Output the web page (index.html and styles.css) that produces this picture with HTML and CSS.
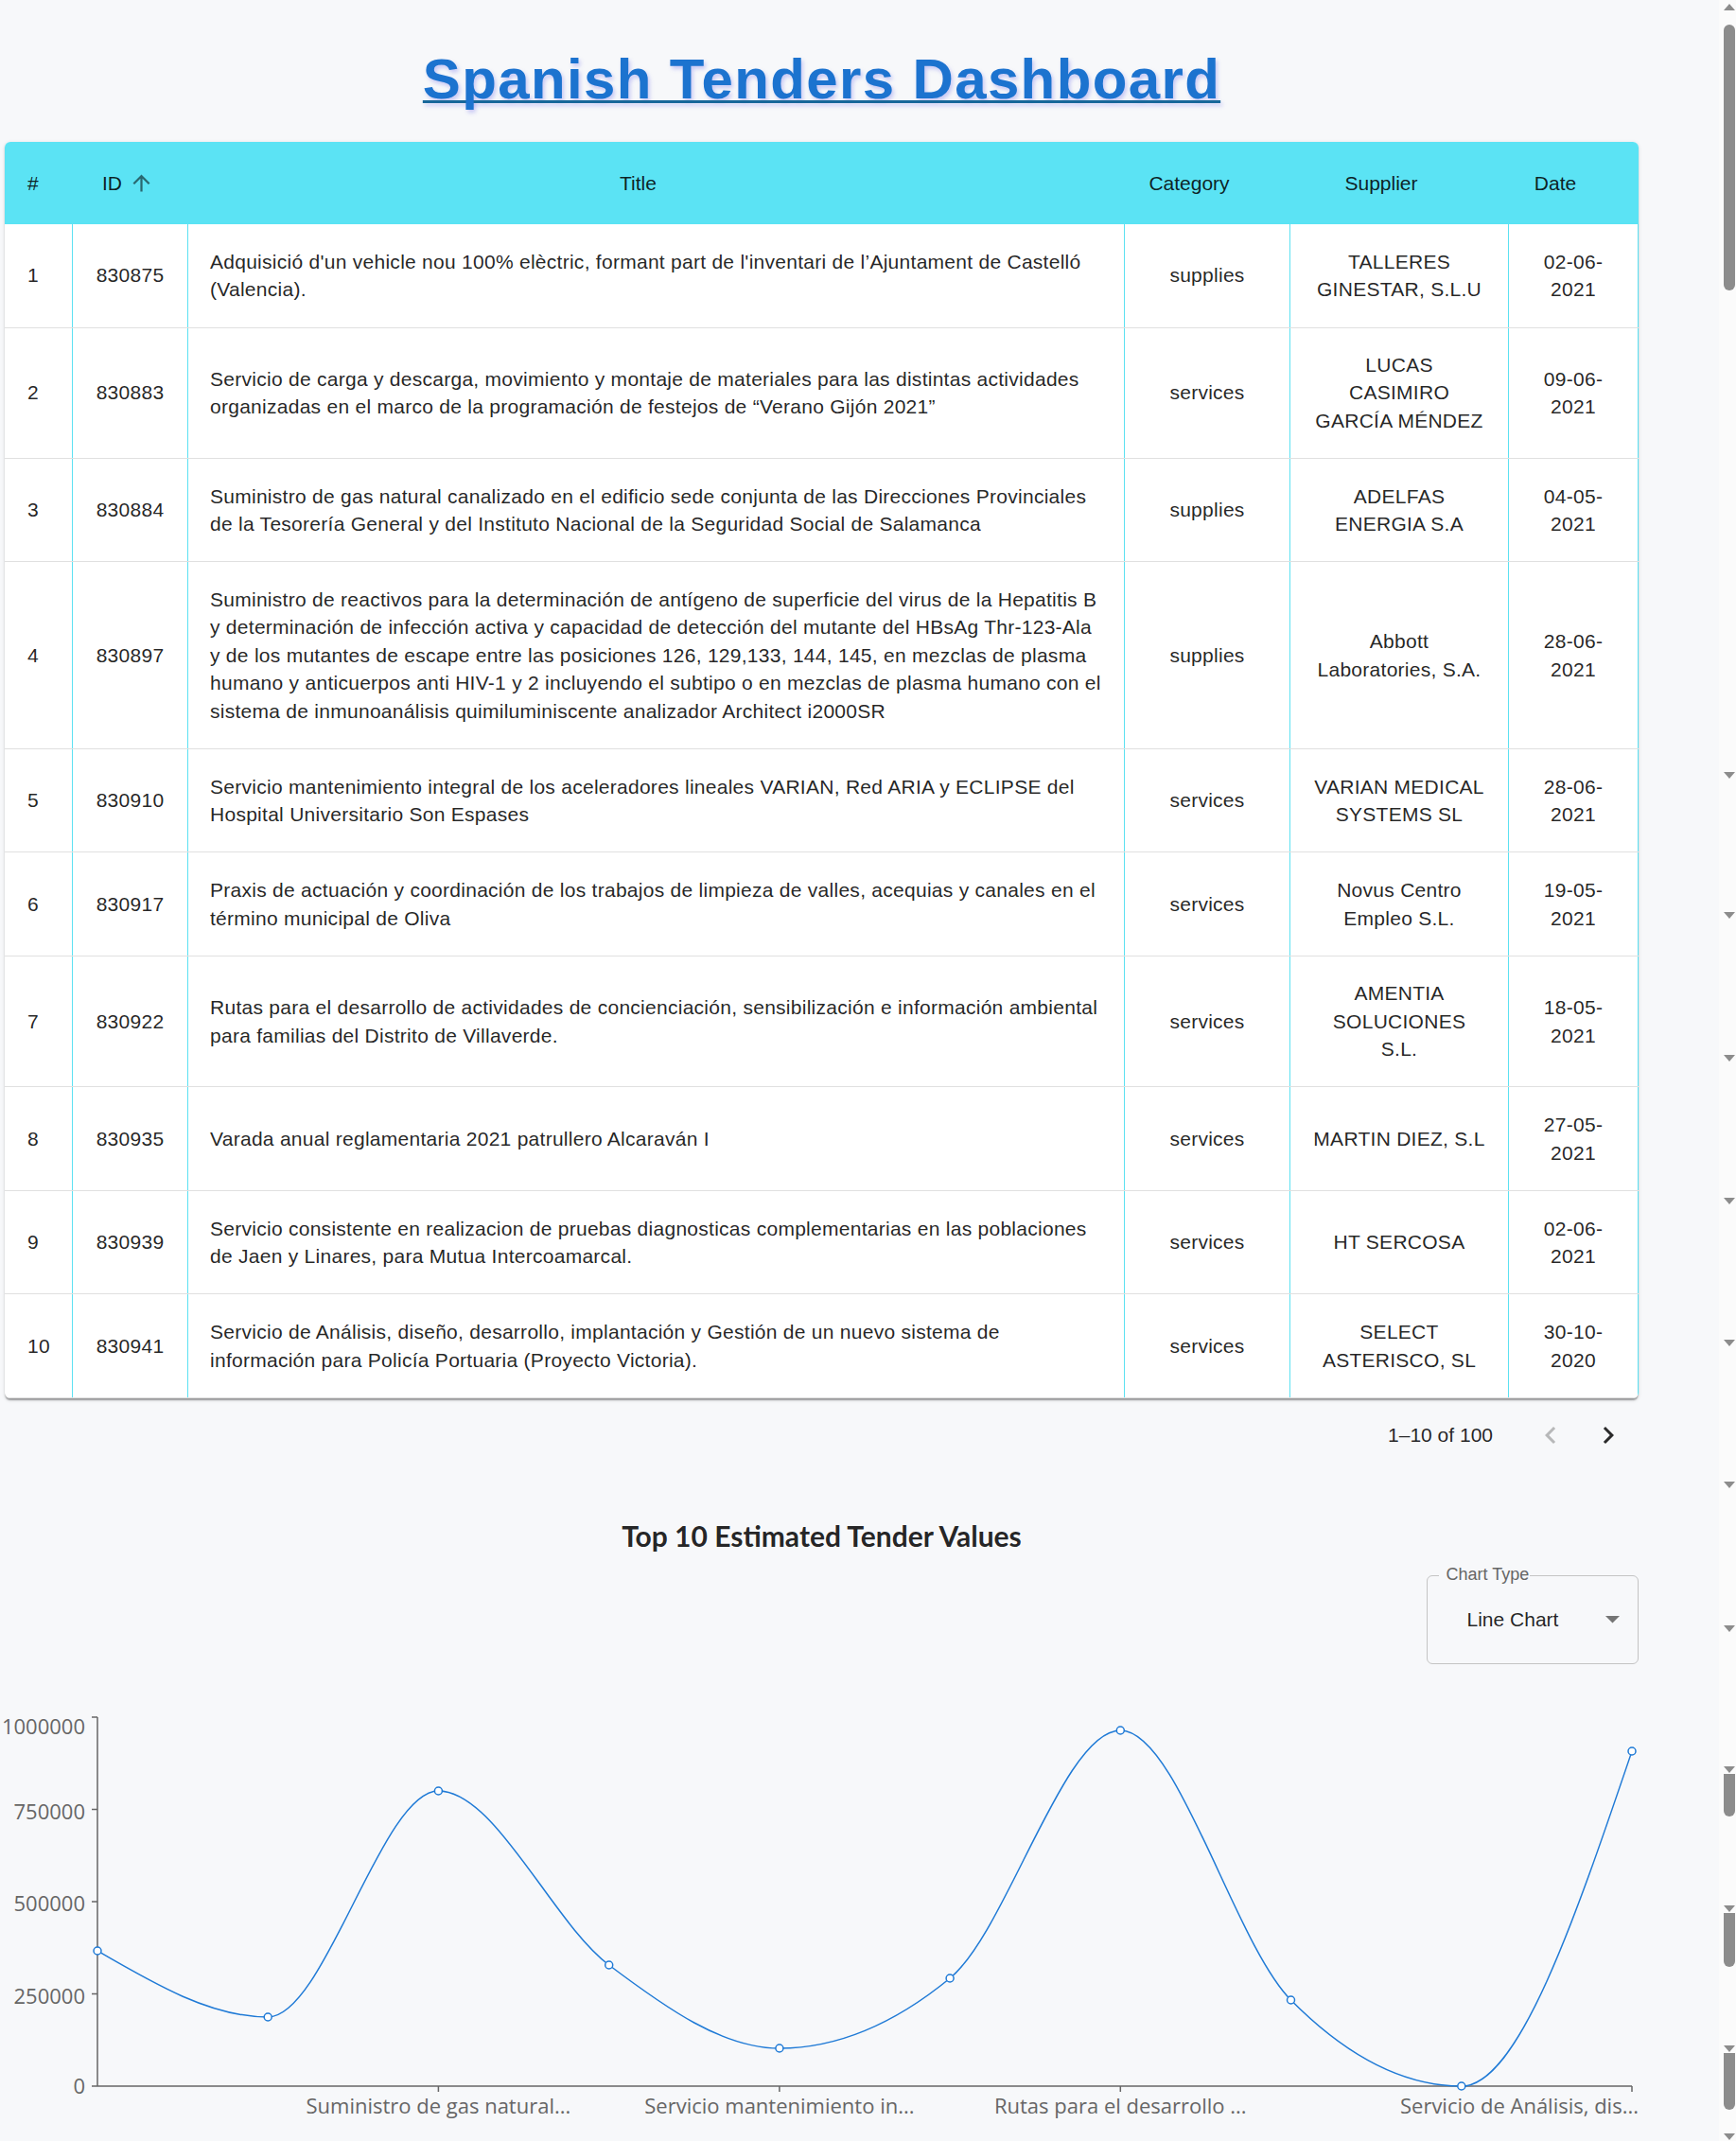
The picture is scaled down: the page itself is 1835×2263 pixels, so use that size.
FILE: index.html
```html
<!DOCTYPE html>
<html lang="es">
<head>
<meta charset="utf-8">
<title>Spanish Tenders Dashboard</title>
<link rel="stylesheet" href="styles.css">
</head>
<body>
<div class="scrollstrip">
  <span class="sb up u0"></span>
  <span class="sb thumb th0"></span>
  <span class="sb down d1"></span>
  <span class="sb down d2"></span>
  <span class="sb down d3"></span>
  <span class="sb down d4"></span>
  <span class="sb down d5"></span>
  <span class="sb down d6"></span>
  <span class="sb down d7"></span>
  <span class="sb down d8"></span>
  <span class="sb thumb th1"></span>
  <span class="sb down d9"></span>
  <span class="sb thumb th2"></span>
  <span class="sb down d10"></span>
  <span class="sb thumb th3"></span>
  <span class="sb down d11"></span>
</div>

<main class="page">
  <h1 class="title">Spanish Tenders Dashboard</h1>

  <div class="grid">
    <div class="row head">
      <div class="hc h-num">#</div>
      <div class="hc h-id">ID <svg class="sort" viewBox="0 0 24 24" width="27" height="27"><path d="M4 12l1.41 1.41L11 7.83V20h2V7.83l5.58 5.59L20 12l-8-8-8 8z"/></svg></div>
      <div class="hc h-center">Title</div>
      <div class="hc h-center">Category</div>
      <div class="hc h-center">Supplier</div>
      <div class="hc h-center">Date</div>
    </div>

    <div class="row body">
      <div class="cell num">1</div>
      <div class="cell mid">830875</div>
      <div class="cell txt"><span class="nw">Adquisició d'un vehicle nou 100% elèctric, formant part de l'inventari de l’Ajuntament de Castelló<br>(Valencia).</span></div>
      <div class="cell mid">supplies</div>
      <div class="cell mid"><span class="nw">TALLERES<br>GINESTAR, S.L.U</span></div>
      <div class="cell mid"><span class="nw">02-06-<br>2021</span></div>
    </div>

    <div class="row body">
      <div class="cell num">2</div>
      <div class="cell mid">830883</div>
      <div class="cell txt"><span class="nw">Servicio de carga y descarga, movimiento y montaje de materiales para las distintas actividades<br>organizadas en el marco de la programación de festejos de “Verano Gijón 2021”</span></div>
      <div class="cell mid">services</div>
      <div class="cell mid"><span class="nw">LUCAS<br>CASIMIRO<br>GARCÍA MÉNDEZ</span></div>
      <div class="cell mid"><span class="nw">09-06-<br>2021</span></div>
    </div>

    <div class="row body">
      <div class="cell num">3</div>
      <div class="cell mid">830884</div>
      <div class="cell txt"><span class="nw">Suministro de gas natural canalizado en el edificio sede conjunta de las Direcciones Provinciales<br>de la Tesorería General y del Instituto Nacional de la Seguridad Social de Salamanca</span></div>
      <div class="cell mid">supplies</div>
      <div class="cell mid"><span class="nw">ADELFAS<br>ENERGIA S.A</span></div>
      <div class="cell mid"><span class="nw">04-05-<br>2021</span></div>
    </div>

    <div class="row body">
      <div class="cell num">4</div>
      <div class="cell mid">830897</div>
      <div class="cell txt"><span class="nw">Suministro de reactivos para la determinación de antígeno de superficie del virus de la Hepatitis B<br>y determinación de infección activa y capacidad de detección del mutante del HBsAg Thr-123-Ala<br>y de los mutantes de escape entre las posiciones 126, 129,133, 144, 145, en mezclas de plasma<br>humano y anticuerpos anti HIV-1 y 2 incluyendo el subtipo o en mezclas de plasma humano con el<br>sistema de inmunoanálisis quimiluminiscente analizador Architect i2000SR</span></div>
      <div class="cell mid">supplies</div>
      <div class="cell mid"><span class="nw">Abbott<br>Laboratories, S.A.</span></div>
      <div class="cell mid"><span class="nw">28-06-<br>2021</span></div>
    </div>

    <div class="row body">
      <div class="cell num">5</div>
      <div class="cell mid">830910</div>
      <div class="cell txt"><span class="nw">Servicio mantenimiento integral de los aceleradores lineales VARIAN, Red ARIA y ECLIPSE del<br>Hospital Universitario Son Espases</span></div>
      <div class="cell mid">services</div>
      <div class="cell mid"><span class="nw">VARIAN MEDICAL<br>SYSTEMS SL</span></div>
      <div class="cell mid"><span class="nw">28-06-<br>2021</span></div>
    </div>

    <div class="row body">
      <div class="cell num">6</div>
      <div class="cell mid">830917</div>
      <div class="cell txt"><span class="nw">Praxis de actuación y coordinación de los trabajos de limpieza de valles, acequias y canales en el<br>término municipal de Oliva</span></div>
      <div class="cell mid">services</div>
      <div class="cell mid"><span class="nw">Novus Centro<br>Empleo S.L.</span></div>
      <div class="cell mid"><span class="nw">19-05-<br>2021</span></div>
    </div>

    <div class="row body">
      <div class="cell num">7</div>
      <div class="cell mid">830922</div>
      <div class="cell txt"><span class="nw">Rutas para el desarrollo de actividades de concienciación, sensibilización e información ambiental<br>para familias del Distrito de Villaverde.</span></div>
      <div class="cell mid">services</div>
      <div class="cell mid"><span class="nw">AMENTIA<br>SOLUCIONES<br>S.L.</span></div>
      <div class="cell mid"><span class="nw">18-05-<br>2021</span></div>
    </div>

    <div class="row body">
      <div class="cell num">8</div>
      <div class="cell mid">830935</div>
      <div class="cell txt"><span class="nw">Varada anual reglamentaria 2021 patrullero Alcaraván I</span></div>
      <div class="cell mid">services</div>
      <div class="cell mid"><span class="nw">MARTIN DIEZ, S.L</span></div>
      <div class="cell mid"><span class="nw">27-05-<br>2021</span></div>
    </div>

    <div class="row body">
      <div class="cell num">9</div>
      <div class="cell mid">830939</div>
      <div class="cell txt"><span class="nw">Servicio consistente en realizacion de pruebas diagnosticas complementarias en las poblaciones<br>de Jaen y Linares, para Mutua Intercoamarcal.</span></div>
      <div class="cell mid">services</div>
      <div class="cell mid"><span class="nw">HT SERCOSA</span></div>
      <div class="cell mid"><span class="nw">02-06-<br>2021</span></div>
    </div>

    <div class="row body">
      <div class="cell num">10</div>
      <div class="cell mid">830941</div>
      <div class="cell txt"><span class="nw">Servicio de Análisis, diseño, desarrollo, implantación y Gestión de un nuevo sistema de<br>información para Policía Portuaria (Proyecto Victoria).</span></div>
      <div class="cell mid">services</div>
      <div class="cell mid"><span class="nw">SELECT<br>ASTERISCO, SL</span></div>
      <div class="cell mid"><span class="nw">30-10-<br>2020</span></div>
    </div>
  </div>

  <div class="pager">
    <span class="pager-text">1–10 of 100</span>
    <svg class="pbtn disabled" viewBox="0 0 24 24" width="36" height="36"><path d="M15.41 16.59 10.83 12l4.58-4.59L14 6l-6 6 6 6z"/></svg>
    <svg class="pbtn active" viewBox="0 0 24 24" width="36" height="36"><path d="M8.59 16.59 13.17 12 8.59 7.41 10 6l6 6-6 6z"/></svg>
  </div>

  <h2 class="chart-title">Top 10 Estimated Tender Values</h2>

  <div class="select-row">
    <div class="select">
      <span class="select-label">Chart Type</span>
      <span class="select-value">Line Chart</span>
      <svg class="select-arrow" viewBox="7 10 10 5" width="15" height="7.5"><path d="M7 10l5 5 5-5z"/></svg>
    </div>
  </div>

  <svg class="chart" viewBox="0 0 1740 473" width="1740" height="473">
    <g class="axis">
      <line x1="103" y1="25" x2="103" y2="415"/>
      <line x1="97" y1="25" x2="103" y2="25"/>
      <line x1="97" y1="122.5" x2="103" y2="122.5"/>
      <line x1="97" y1="220" x2="103" y2="220"/>
      <line x1="97" y1="317.5" x2="103" y2="317.5"/>
      <line x1="97" y1="415" x2="103" y2="415"/>
      <line x1="103" y1="415" x2="1725" y2="415"/>
      <line x1="463.4" y1="415" x2="463.4" y2="421"/>
      <line x1="823.9" y1="415" x2="823.9" y2="421"/>
      <line x1="1184.3" y1="415" x2="1184.3" y2="421"/>
      <line x1="1725" y1="415" x2="1725" y2="421"/>
    </g>
    <g class="ylab">
      <text x="90" y="43">1000000</text>
      <text x="90" y="133">750000</text>
      <text x="90" y="230">500000</text>
      <text x="90" y="327.5">250000</text>
      <text x="90" y="423">0</text>
    </g>
    <g class="xlab">
      <text x="463.4" y="444">Suministro de gas natural...</text>
      <text x="823.9" y="444">Servicio mantenimiento in...</text>
      <text x="1184.3" y="444">Rutas para el desarrollo ...</text>
      <text class="end" x="1732" y="444">Servicio de Análisis, dis...</text>
    </g>
    <path class="line" d="M103,272 C163.1,307 223.1,342 283.2,342 C343.3,342 403.3,103 463.4,103 C523.5,103 583.6,241.7 643.7,287 C703.8,332.3 763.8,375 823.9,375 C884,375 944,350.3 1004.1,301 C1064.2,251.7 1124.2,39 1184.3,39 C1244.4,39 1304.4,263.3 1364.5,324 C1424.6,384.7 1484.7,415 1544.8,415 C1604.9,415 1664.9,238 1725,61"/>
    <g class="dots">
      <circle cx="103" cy="272" r="4"/>
      <circle cx="283.2" cy="342" r="4"/>
      <circle cx="463.4" cy="103" r="4"/>
      <circle cx="643.7" cy="287" r="4"/>
      <circle cx="823.9" cy="375" r="4"/>
      <circle cx="1004.1" cy="301" r="4"/>
      <circle cx="1184.3" cy="39" r="4"/>
      <circle cx="1364.5" cy="324" r="4"/>
      <circle cx="1544.8" cy="415" r="4"/>
      <circle cx="1725" cy="61" r="4"/>
    </g>
  </svg>
</main>
</body>
</html>
```

FILE: styles.css
```css
html, body {
  margin: 0;
  padding: 0;
  background: #f7f8fa;
  overflow: hidden;
}

body {
  font-family: "Liberation Sans", Arial, sans-serif;
  color: rgba(0, 0, 0, 0.87);
}

.page {
  margin-left: 5px;
  width: 1727px;
}

/* ---------- heading ---------- */
.title {
  margin: 49px 0 0;
  height: 70px;
  line-height: 70px;
  text-align: center;
  font-size: 60px;
  font-weight: 700;
  letter-spacing: 1.37px;
  color: #1c73cf;
  text-decoration: underline;
  text-decoration-color: #17679a;
  text-decoration-thickness: 3px;
  text-underline-offset: 2px;
  text-decoration-skip-ink: none;
  text-shadow: 2px 3px 4px rgba(110, 110, 235, 0.35);
}

/* ---------- data grid ---------- */
.grid {
  margin-top: 31px;
  background: #ffffff;
  border-radius: 6px;
  overflow: hidden;
  box-shadow: 0 3px 1.5px -1.5px rgba(0, 0, 0, 0.2),
              0 1.5px 1.5px 0 rgba(0, 0, 0, 0.14),
              0 1.5px 4.5px 0 rgba(0, 0, 0, 0.12);
}

.row {
  display: grid;
  grid-template-columns: 72px 122px 990px 175px 231px 137px;
}

.head {
  height: 87px;
  background: #5be3f4;
}

.hc {
  display: flex;
  align-items: center;
  font-size: 21px;
  white-space: nowrap;
}

.h-num {
  padding-left: 24px;
}

.h-id {
  padding-left: 31px;
}

.sort {
  margin-left: 7px;
  fill: rgba(0, 0, 0, 0.54);
}

.h-center {
  justify-content: center;
  padding-right: 39px;
}

.body {
  min-height: 109.5px;
  box-sizing: border-box;
  border-bottom: 1px solid #e0e0e0;
}

.cell {
  display: flex;
  align-items: center;
  box-sizing: border-box;
  padding: 24.4px 0;
  font-size: 21px;
  line-height: 29.55px;
  letter-spacing: 0.27px;
  border-right: 1px solid #5ce1f2;
}

.num {
  padding-left: 24px;
}

.mid {
  justify-content: center;
  text-align: center;
}

.txt {
  padding-left: 23px;
  padding-right: 12px;
}

.nw {
  white-space: nowrap;
}

/* ---------- pagination ---------- */
.pager {
  height: 78px;
  display: flex;
  justify-content: flex-end;
  align-items: center;
  padding-right: 14px;
  font-size: 21px;
}

.pager-text {
  margin-right: 43px;
}

.pbtn {
  display: block;
}

.pbtn + .pbtn {
  margin-left: 25px;
}

.disabled {
  fill: rgba(0, 0, 0, 0.26);
}

.active {
  fill: #2a2a2a;
}

/* ---------- chart section ---------- */
.chart-title {
  margin: 49.5px 0 0;
  font-family: Lato, "Open Sans", sans-serif;
  font-weight: 700;
  font-size: 30px;
  line-height: 36px;
  text-align: center;
  color: rgba(0, 0, 0, 0.87);
}

.select-row {
  display: flex;
  justify-content: flex-end;
  margin-top: 23.5px;
}

.select {
  position: relative;
  width: 224px;
  height: 94px;
  box-sizing: border-box;
  border: 1.5px solid #c4c4c4;
  border-radius: 6px;
  display: flex;
  align-items: center;
  padding-left: 41.5px;
  padding-right: 19.5px;
}

.select-label {
  position: absolute;
  top: -13px;
  left: 12px;
  padding: 0 1px 0 7.5px;
  background: #f7f8fa;
  font-size: 18px;
  line-height: 22px;
  color: #666666;
}

.select-value {
  font-size: 21px;
}

.select-arrow {
  margin-left: auto;
  fill: #757575;
}

.chart {
  display: block;
  margin-top: 31px;
  margin-left: -5px;
  overflow: visible;
}

.axis line {
  stroke: #666666;
  stroke-width: 1.5;
}

.ylab text,
.xlab text {
  font-family: "Open Sans", sans-serif;
  font-size: 22px;
  fill: #666666;
}

.ylab text {
  text-anchor: end;
}

.xlab text {
  text-anchor: middle;
}

.xlab text.end {
  text-anchor: end;
}

.line {
  fill: none;
  stroke: #1f7ad6;
  stroke-width: 1.5;
}

.dots circle {
  fill: #ffffff;
  stroke: #1f7ad6;
  stroke-width: 1.5;
}

/* ---------- stitched scrollbar strip ---------- */
.scrollstrip {
  position: fixed;
  top: 0;
  right: 0;
  width: 18px;
  height: 2263px;
  background: #fbfbfb;
}

.sb {
  position: absolute;
  left: 5px;
}

.up {
  width: 0;
  height: 0;
  border-left: 6px solid transparent;
  border-right: 6px solid transparent;
  border-bottom: 7px solid #8c8c8c;
}

.down {
  width: 0;
  height: 0;
  border-left: 6px solid transparent;
  border-right: 6px solid transparent;
  border-top: 7px solid #8c8c8c;
}

.thumb {
  width: 12px;
  background: #8c8c8c;
  border-radius: 6px;
}

.u0 { top: 4px; }
.th0 { top: 26px; height: 281px; }
.d1 { top: 816px; }
.d2 { top: 964px; }
.d3 { top: 1115px; }
.d4 { top: 1266px; }
.d5 { top: 1416px; }
.d6 { top: 1566px; }
.d7 { top: 1718px; }
.d8 { top: 1867px; }
.th1 { top: 1875px; height: 45px; border-radius: 0 0 6px 6px; }
.d9 { top: 2014px; }
.th2 { top: 2022px; height: 57px; border-radius: 0 0 6px 6px; }
.d10 { top: 2162px; }
.th3 { top: 2170px; height: 60px; border-radius: 0 0 6px 6px; }
.d11 { top: 2255px; }
```
